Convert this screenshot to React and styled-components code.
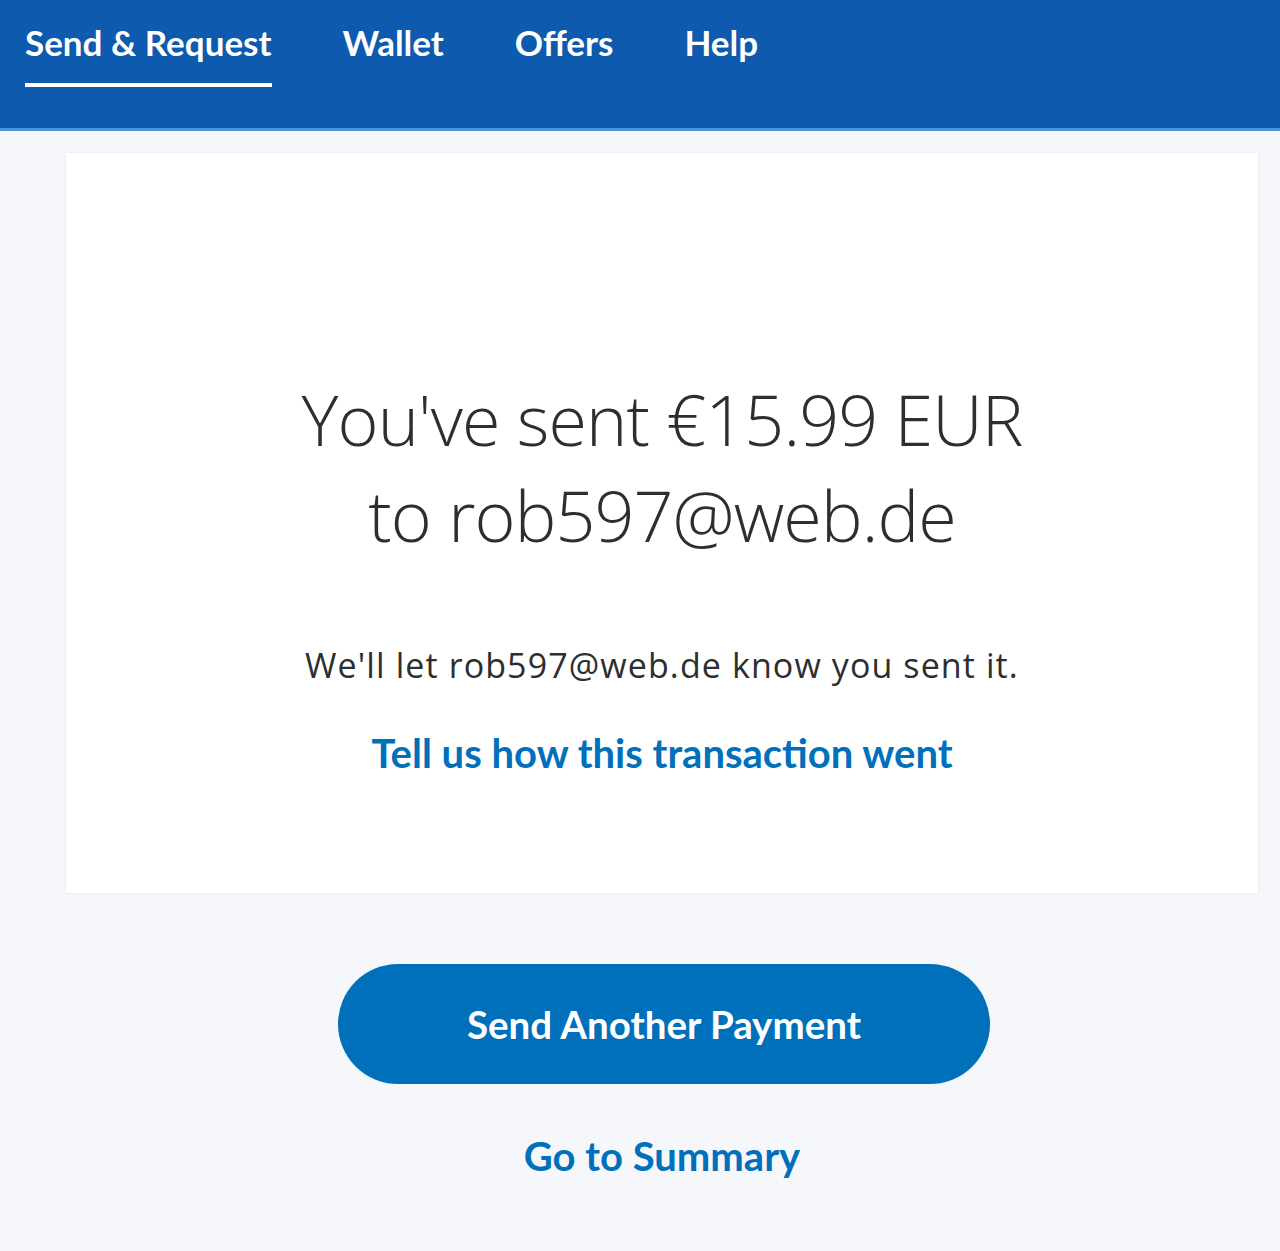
import styled, { createGlobalStyle } from "styled-components";

const GlobalStyle = createGlobalStyle`
  html, body {
    margin: 0;
    padding: 0;
    background: #f5f7fa;
  }

  * {
    box-sizing: border-box;
  }
`;

const Page = styled.div`
  min-height: 1251px;
  background: #f5f7fa;
`;

const TopBar = styled.header`
  height: 131px;
  background: #0d5aae;
  border-bottom: 3px solid #4d97d8;
  display: flex;
  align-items: flex-start;
  padding-left: 25px;
`;

const NavList = styled.nav`
  display: flex;
  gap: 71px;
`;

const NavItem = styled.a`
  display: block;
  padding-top: 21px;
  padding-bottom: 20px;
  font-family: Lato, "Open Sans", sans-serif;
  font-weight: 700;
  font-size: 35px;
  line-height: 42px;
  color: #ffffff;
  text-decoration: none;
  border-bottom: 4px solid ${({ $active }) => ($active ? "#ffffff" : "transparent")};
`;

const Main = styled.main`
  display: flex;
  flex-direction: column;
  align-items: center;
  padding: 22px 22px 0 66px;
`;

const Card = styled.section`
  width: 100%;
  height: 740px;
  background: #ffffff;
  box-shadow: 0 0 3px rgba(0, 0, 0, 0.08);
  display: flex;
  flex-direction: column;
  align-items: center;
  padding-top: 218px;
  text-align: center;
`;

const Headline = styled.h1`
  margin: 0;
  font-family: "Open Sans", sans-serif;
  font-weight: 300;
  font-size: 70px;
  line-height: 96px;
  color: #2c2e2f;
  letter-spacing: -0.9px;
`;

const Note = styled.p`
  margin: 80px 0 0;
  font-family: "Open Sans", sans-serif;
  font-size: 34px;
  line-height: 44px;
  letter-spacing: 1.1px;
  color: #2c2e2f;
`;

const TextLink = styled.a`
  display: block;
  margin-top: ${({ $gap }) => $gap || "0"};
  font-family: Lato, "Open Sans", sans-serif;
  font-weight: 700;
  font-size: 40px;
  line-height: 48px;
  color: #0070ba;
  text-decoration: none;
`;

const PrimaryButton = styled.button`
  margin-top: 71px;
  margin-left: 4px;
  width: 652px;
  height: 120px;
  border: none;
  border-radius: 60px;
  background: #0070ba;
  color: #ffffff;
  font-family: Lato, "Open Sans", sans-serif;
  font-weight: 700;
  font-size: 38.5px;
  cursor: pointer;
`;

export default function App() {
  return (
    <>
      <GlobalStyle />
      <Page>
        <TopBar>
          <NavList>
            <NavItem href="#" $active>
              Send &amp; Request
            </NavItem>
            <NavItem href="#">Wallet</NavItem>
            <NavItem href="#">Offers</NavItem>
            <NavItem href="#">Help</NavItem>
          </NavList>
        </TopBar>

        <Main>
          <Card>
            <Headline>
              You've sent €15.99 EUR
              <br />
              to rob597@web.de
            </Headline>
            <Note>We'll let rob597@web.de know you sent it.</Note>
            <TextLink href="#" $gap="42px">
              Tell us how this transaction went
            </TextLink>
          </Card>

          <PrimaryButton>Send Another Payment</PrimaryButton>
          <TextLink href="#" $gap="48px">
            Go to Summary
          </TextLink>
        </Main>
      </Page>
    </>
  );
}
